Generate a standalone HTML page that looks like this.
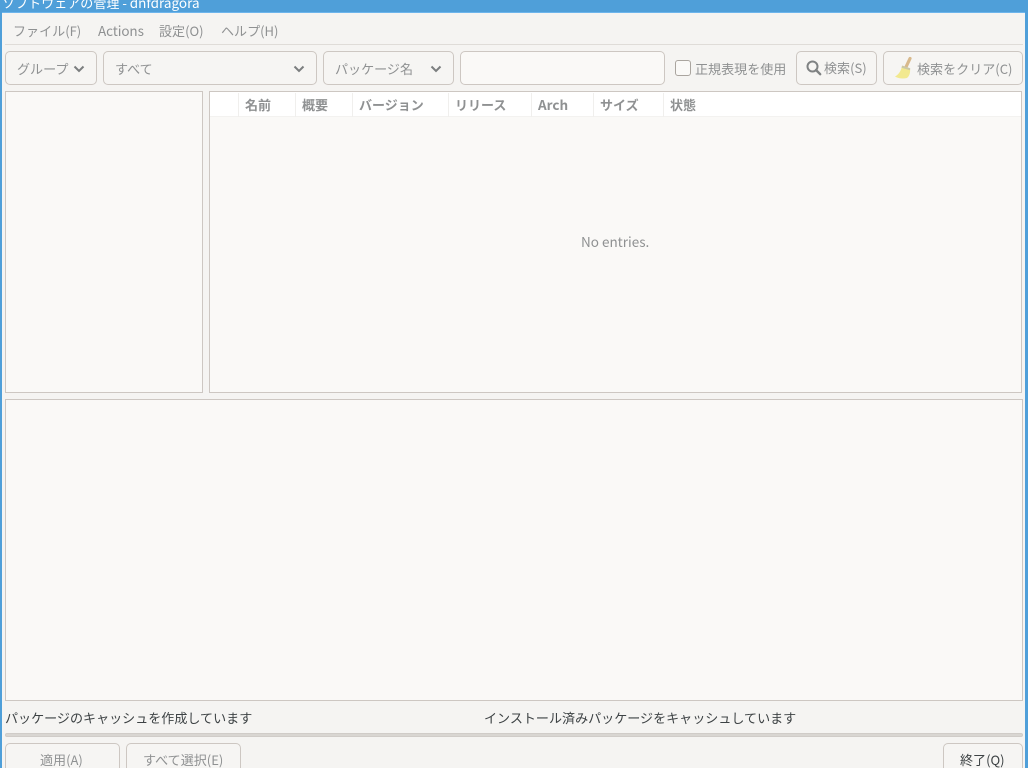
<!DOCTYPE html>
<html lang="ja"><head><meta charset="utf-8"><style>
html,body{margin:0;padding:0;width:1028px;height:768px;overflow:hidden;background:#f5f4f2}
*{box-sizing:border-box}
body{font-family:"Noto Sans CJK JP","Liberation Sans",sans-serif;font-size:13.05px;color:#2e3436;position:relative}
.a{position:absolute;white-space:nowrap;line-height:18px}
.l{font-size:13.5px}
.box{position:absolute;border:1px solid #cdc7c2;background:#faf9f7}
.btn{position:absolute;border:1px solid #cdc7c2;border-radius:5px;background:#f6f5f3}
.m{color:#8f9192}
.h{position:absolute;top:93px;height:24px;line-height:23px;font-weight:700;color:#8f9192;font-size:13px;white-space:nowrap;padding-left:6px;border-right:1px solid #f0efed}
svg{position:absolute}
</style></head><body>
<div style="position:absolute;left:0;top:0;width:1028px;height:13px;background:#4f9fd9;border-bottom:1px solid #6db5ec"></div>
<div style="position:absolute;left:0;top:0;width:2px;height:768px;background:#4f9fd9"></div>
<div style="position:absolute;right:0;top:0;width:3px;height:768px;background:#4f9fd9"></div>
<div class="a" style="left:2px;top:-7px;color:#fff">ソフトウェアの管理 - <span style="font-size:13.5px">dnfdragora</span></div>

<div class="a m" style="left:13px;top:22px">ファイル(F)</div>
<div class="a m l" style="left:98px;top:21px;letter-spacing:-.1px">Actions</div>
<div class="a m" style="left:159px;top:22px">設定(O)</div>
<div class="a m" style="left:221px;top:22px">ヘルプ(H)</div>
<div style="position:absolute;left:5px;top:44px;width:1018px;height:1px;background:#dfdcd8"></div>

<div class="btn" style="left:5px;top:51px;width:92px;height:34px"></div>
<div class="a m" style="left:17px;top:60px">グループ</div>
<svg style="left:73px;top:65px" width="12" height="8" viewBox="0 0 12 8"><path d="M1.500 1.500L6 6l4.500-4.500" fill="none" stroke="#7b7e7f" stroke-width="2"/></svg>

<div class="btn" style="left:103px;top:51px;width:214px;height:34px"></div>
<div class="a m" style="left:115px;top:60px">すべて</div>
<svg style="left:293px;top:65px" width="12" height="8" viewBox="0 0 12 8"><path d="M1.500 1.500L6 6l4.500-4.500" fill="none" stroke="#7b7e7f" stroke-width="2"/></svg>

<div class="btn" style="left:323px;top:51px;width:131px;height:34px"></div>
<div class="a m" style="left:335px;top:60px">パッケージ名</div>
<svg style="left:430px;top:65px" width="12" height="8" viewBox="0 0 12 8"><path d="M1.500 1.500L6 6l4.500-4.500" fill="none" stroke="#7b7e7f" stroke-width="2"/></svg>

<div class="btn" style="left:460px;top:51px;width:205px;height:34px;background:#faf9f7"></div>
<div style="position:absolute;left:675px;top:60px;width:16px;height:16px;border:1px solid #aaa59f;border-radius:3px;background:#faf9f7"></div>
<div class="a m" style="left:695px;top:60px">正規表現を使用</div>

<div class="btn" style="left:796px;top:51px;width:81px;height:34px"></div>
<svg style="left:805px;top:59px" width="17" height="17" viewBox="0 0 17 17"><circle cx="7.500" cy="7.500" r="5" fill="none" stroke="#7f8283" stroke-width="2"/><path d="M11 11l4.200 4.200" stroke="#7f8283" stroke-width="2.400" stroke-linecap="round"/></svg>
<div class="a m" style="left:824px;top:59px">検索(S)</div>

<div class="btn" style="left:883px;top:51px;width:140px;height:34px"></div>
<svg style="left:893px;top:55px" width="22" height="25" viewBox="0 0 22 25"><path d="M17 3.500L13 12" stroke="#d8b98c" stroke-width="3.200" stroke-linecap="round"/><path d="M9 11l8 2.500c.5 4-.5 7.500-3 9.500-4 1-9 .5-12-1.500 3-1.500 6-5 7-10.500z" fill="#f2e98f"/><path d="M9.200 10.500l8 2.800-.2 2-8.500-2.500z" fill="#cbc8a6"/></svg>
<div class="a m" style="left:917px;top:60px">検索をクリア(C)</div>

<div class="box" style="left:5px;top:91px;width:198px;height:302px"></div>
<div class="box" style="left:209px;top:91px;width:813px;height:302px"></div>
<div style="position:absolute;left:210px;top:92px;width:811px;height:25px;background:#fff;border-bottom:1px solid #f3f2f0"></div>
<div class="h" style="left:210px;width:29px;padding:0"></div>
<div class="h" style="left:239px;width:57px">名前</div>
<div class="h" style="left:296px;width:57px">概要</div>
<div class="h" style="left:353px;width:96px">バージョン</div>
<div class="h" style="left:449px;width:83px">リリース</div>
<div class="h" style="left:532px;width:62px;font-size:13.5px;line-height:22px">Arch</div>
<div class="h" style="left:594px;width:70px">サイズ</div>
<div class="h" style="left:664px;width:60px;border:0">状態</div>
<div class="a m l" style="left:581px;top:232px">No entries.</div>

<div class="box" style="left:5px;top:399px;width:1018px;height:302px"></div>

<div class="a" style="left:5px;top:709px;color:#3d4244">パッケージのキャッシュを作成しています</div>
<div class="a" style="left:484px;top:709px;color:#3d4244">インストール済みパッケージをキャッシュしています</div>
<div style="position:absolute;left:5px;top:733px;width:1018px;height:4px;background:#d9d6d2;border-radius:2px;border:1px solid #d0ccc8"></div>

<div class="btn" style="left:5px;top:743px;width:115px;height:40px"></div>
<div class="a m" style="left:40px;top:751px">適用(A)</div>
<div class="btn" style="left:126px;top:743px;width:115px;height:40px"></div>
<div class="a m" style="left:143px;top:751px">すべて選択(E)</div>
<div class="btn" style="left:943px;top:743px;width:80px;height:40px"></div>
<div class="a" style="left:960px;top:751px;color:#3d4244">終了(Q)</div>
</body></html>
